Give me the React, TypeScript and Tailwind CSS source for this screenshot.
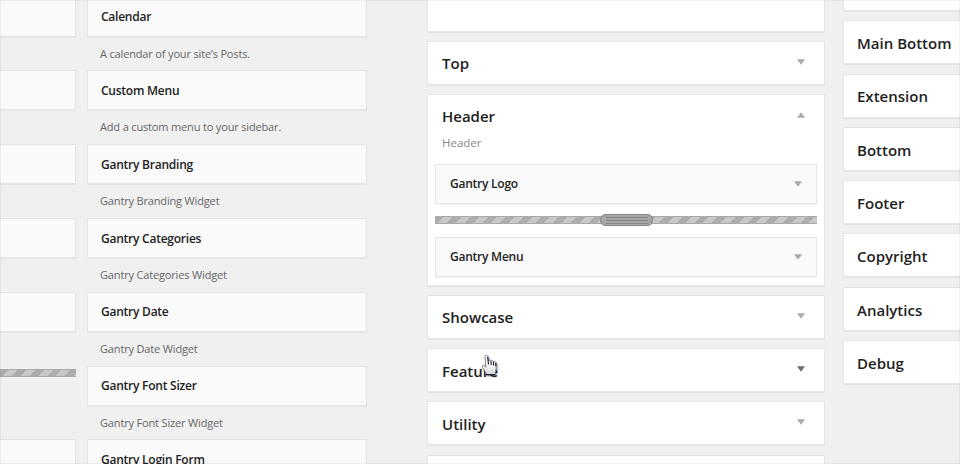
import clsx from 'clsx';

interface Widget {
  title: string;
  description: string;
}

interface Area {
  name: string;
  active?: boolean;
}

const widgets: Widget[] = [
  { title: 'Calendar', description: 'A calendar of your site’s Posts.' },
  { title: 'Custom Menu', description: 'Add a custom menu to your sidebar.' },
  { title: 'Gantry Branding', description: 'Gantry Branding Widget' },
  { title: 'Gantry Categories', description: 'Gantry Categories Widget' },
  { title: 'Gantry Date', description: 'Gantry Date Widget' },
  { title: 'Gantry Font Sizer', description: 'Gantry Font Sizer Widget' },
  { title: 'Gantry Login Form', description: '' },
];

// The divider widget has no card, only its striped bar
const neighbours = ['card', 'card', 'card', 'card', 'card', 'divider', 'card'];

const areas: Area[] = [
  { name: 'Showcase' },
  { name: 'Feature', active: true },
  { name: 'Utility' },
  { name: '' },
];

const sideAreas = ['', 'Main Bottom', 'Extension', 'Bottom', 'Footer', 'Copyright', 'Analytics', 'Debug'];

const stripes =
  'border-y border-[#aaa] bg-[repeating-linear-gradient(135deg,#acacac_0px,#acacac_6.2px,#c8c8c8_6.2px,#c8c8c8_12.5px)]';

function Arrow({ up = false, dark = false }: { up?: boolean; dark?: boolean }) {
  return (
    <svg viewBox="0 0 8 6" className={clsx('h-[6px] w-2 shrink-0', up && 'rotate-180', dark ? 'fill-[#6c6c6c]' : 'fill-[#aaa]')}>
      <path d="M0 .3h8L4 5.8z" />
    </svg>
  );
}

function WidgetCard({ title, arrow = false }: { title?: string; arrow?: boolean }) {
  return (
    <div
      className={clsx(
        'flex h-10 shrink-0 items-center justify-between border border-[#e5e5e5] bg-[#fafafa] text-[12px] font-semibold tracking-[-0.24px] text-[#222] shadow-[0_1px_1px_rgba(0,0,0,0.04)]',
        arrow ? 'pr-[14px] pl-[14px]' : 'pt-px pl-[13px]'
      )}
    >
      <span>{title}</span>
      {arrow && <Arrow />}
    </div>
  );
}

function AreaCard({ name, active = false, arrow = true }: Area & { arrow?: boolean }) {
  return (
    <div
      className={clsx(
        'flex h-11 shrink-0 items-center justify-between border border-[#e5e5e5] bg-white pr-[19px] shadow-[0_1px_1px_rgba(0,0,0,0.04)]',
        arrow ? 'pt-px pl-3.5' : 'pt-[2px] pl-[13px]'
      )}
    >
      <h3 className="text-[15px] font-semibold text-[#222]">{name}</h3>
      {arrow && name && (
        <span className="-mt-[3px] flex">
          <Arrow dark={active} />
        </span>
      )}
    </div>
  );
}

function Divider() {
  return (
    <div className={clsx('flex h-2 items-center justify-center', stripes)}>
      <div className="ml-px flex h-3 w-[53px] shrink-0 flex-col items-center justify-center gap-[2px] rounded-full border border-[#8c8c8c] bg-[#a6a6a6] shadow-[0_0_1px_#999]">
        <div className="h-px w-[42px] bg-[#858585]" />
        <div className="h-px w-[42px] bg-[#858585]" />
        <div className="h-px w-[42px] bg-[#858585]" />
      </div>
    </div>
  );
}

function HandCursor() {
  return (
    <svg viewBox="0 0 18 24" className="absolute top-[354px] left-[481px] h-6 w-[18px] drop-shadow-[1px_1px_1px_rgba(0,0,0,0.4)]">
      <defs>
        <linearGradient id="hand" x1="0" y1="0" x2="0" y2="1">
          <stop offset="0.4" stopColor="#fff" />
          <stop offset="1" stopColor="#d4d4d4" />
        </linearGradient>
      </defs>
      <path
        d="M4 2.600C4 .900 6.500.900 6.700 2.600L7.300 7.200C7.800 5.900 9.700 6 9.900 7.300C10.500 6.200 12.200 6.500 12.400 7.900C13.100 7.100 14.700 7.500 14.800 8.900L15.200 14C15.200 16.500 14.100 17.400 14 20.500H5.300C5.300 18.700 3.200 16.800 1.700 13.900C.600 11.800 2.200 10.300 3.700 11.900L4.900 13.200Z"
        fill="url(#hand)"
        stroke="#77778a"
        strokeWidth="0.900"
      />
      <path d="M6.700 3L7.500 10.500M9.900 7.300L10.300 11M12.400 8L12.700 11.400M14.800 9L14.900 12" fill="none" stroke="#1c1c30" strokeWidth="1.100" />
      <path d="M5 20.700H14.300" stroke="#1c1c30" strokeWidth="1.300" />
    </svg>
  );
}

export default function App() {
  return (
    <div className="relative flex h-[464px] w-[960px] overflow-hidden bg-[#f0f0f0] font-['Open_Sans','Noto_Sans',sans-serif]">
      {/* Left edge of the available widgets */}
      <div className="-mt-[3.400px] w-[76px] shrink-0">
        {neighbours.map((kind, i) => (
          <div key={i} className="h-[73.800px]">
            {kind === 'card' ? (
              <div className="-ml-1">
                <WidgetCard />
              </div>
            ) : (
              <div className="pt-[3px]">
                <div className={clsx('h-2', stripes)} />
              </div>
            )}
          </div>
        ))}
      </div>

      {/* Available widgets */}
      <div className="-mt-[3.400px] ml-[11px] w-[280px] shrink-0">
        {widgets.map((widget) => (
          <div key={widget.title} className="h-[73.800px]">
            <WidgetCard title={widget.title} />
            <p className="pt-2 pl-[13px] text-[11px] leading-[18px] tracking-[-0.16px] text-[#666]">{widget.description}</p>
          </div>
        ))}
      </div>

      {/* Widget areas */}
      <div className="-mt-3 ml-[60px] flex w-[398px] shrink-0 flex-col gap-[9.200px]">
        <AreaCard name="" />
        <AreaCard name="Top" />
        <section className="h-[191.500px] shrink-0 border border-[#e5e5e5] bg-white px-[7px] shadow-[0_1px_1px_rgba(0,0,0,0.04)]">
          <div className="flex h-[43px] items-center justify-between pr-3 pl-[7px]">
            <h3 className="-mt-px text-[15px] font-semibold text-[#222]">Header</h3>
            <span className="-mt-1 flex">
              <Arrow up />
            </span>
          </div>
          <p className="h-[26px] pl-[7px] text-[11.500px] leading-[9px] text-[#888]">Header</p>
          <WidgetCard title="Gantry Logo" arrow />
          <div className="pt-3 pb-[12.500px]">
            <Divider />
          </div>
          <WidgetCard title="Gantry Menu" arrow />
        </section>
        {areas.map((area) => (
          <AreaCard key={area.name} {...area} />
        ))}
      </div>

      {/* Second column of areas, running past the right edge */}
      <div className="-mt-[33px] ml-[18px] flex w-[399px] shrink-0 flex-col gap-[9.300px]">
        {sideAreas.map((name) => (
          <AreaCard key={name} name={name} arrow={false} />
        ))}
      </div>

      <HandCursor />
      <div className="pointer-events-none absolute inset-0 border border-black/5" />
    </div>
  );
}
